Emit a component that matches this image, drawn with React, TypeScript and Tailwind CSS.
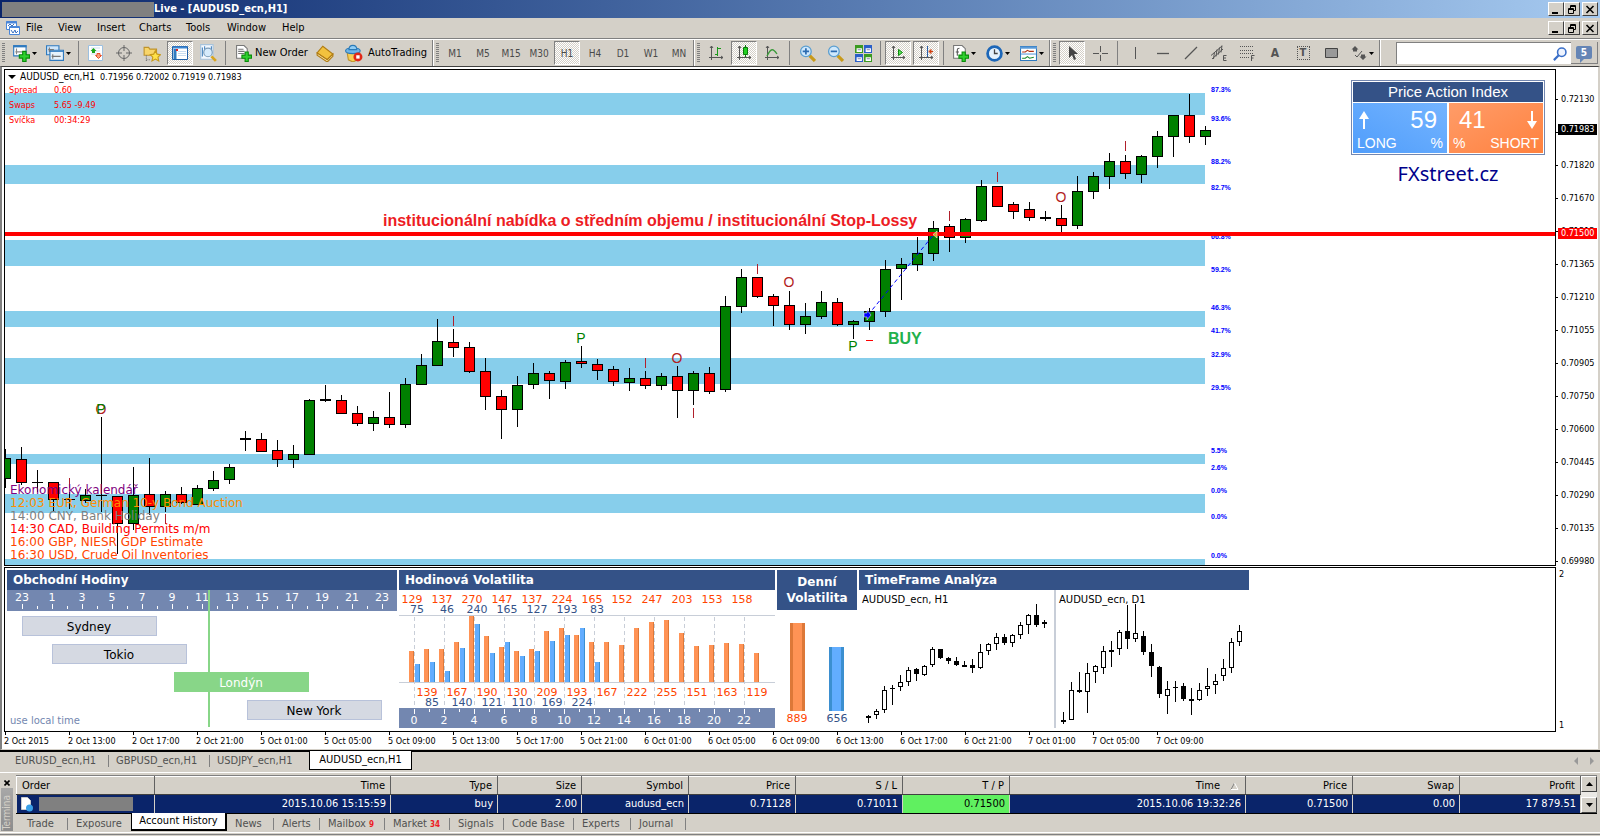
import React from "react";
import clsx from "clsx";

const menuItems = [
  { label: "File", width: "w-8" },
  { label: "View", width: "w-[39px]" },
  { label: "Insert", width: "w-[42px]" },
  { label: "Charts", width: "w-[47px]" },
  { label: "Tools", width: "w-[41px]" },
  { label: "Window", width: "w-[55px]" },
  { label: "Help", width: "w-10" },
];

const timeframes = ["M1", "M5", "M15", "M30", "H1", "H4", "D1", "W1", "MN"];

// [top, bottom] of the volume zones
const zones = [
  [93, 115],
  [165, 184],
  [240, 266],
  [311, 327],
  [358, 384],
  [454, 464],
  [494, 513],
  [559, 565],
];

// [high, low, body top, body bottom, rising]
const candles = [
  [449, 488, 458, 479, 1],
  [447, 485, 459, 483, 0],
  [470, 492, 482, 483, 0],
  [482, 511, 482, 500, 0],
  [492, 509, 499, 500, 0],
  [489, 503, 495, 501, 1],
  [417, 512, 495, 496, 0],
  [496, 554, 496, 524, 0],
  [467, 530, 495, 524, 1],
  [458, 515, 494, 507, 0],
  [491, 512, 494, 507, 1],
  [487, 504, 494, 503, 0],
  [485, 505, 488, 505, 1],
  [471, 491, 480, 489, 1],
  [464, 484, 467, 480, 1],
  [431, 451, 438, 440, 0],
  [433, 452, 439, 452, 0],
  [440, 467, 450, 460, 0],
  [445, 468, 454, 460, 1],
  [399, 455, 400, 455, 1],
  [385, 402, 399, 401, 0],
  [395, 414, 400, 414, 0],
  [406, 426, 413, 424, 0],
  [411, 431, 417, 424, 1],
  [392, 428, 417, 425, 0],
  [378, 428, 384, 425, 1],
  [354, 385, 365, 385, 1],
  [319, 366, 341, 366, 1],
  [329, 357, 342, 348, 0],
  [342, 373, 347, 372, 0],
  [358, 410, 371, 397, 0],
  [390, 439, 396, 410, 0],
  [376, 427, 385, 410, 1],
  [363, 389, 373, 385, 1],
  [371, 399, 373, 381, 0],
  [360, 389, 362, 382, 1],
  [346, 368, 361, 364, 0],
  [359, 380, 364, 371, 0],
  [366, 386, 369, 382, 0],
  [368, 391, 378, 383, 1],
  [371, 389, 378, 386, 0],
  [373, 390, 376, 386, 1],
  [366, 418, 376, 391, 0],
  [371, 405, 373, 391, 1],
  [367, 394, 373, 392, 0],
  [296, 392, 306, 390, 1],
  [269, 313, 277, 307, 1],
  [277, 298, 277, 297, 0],
  [294, 326, 296, 306, 0],
  [291, 330, 305, 325, 0],
  [303, 334, 316, 325, 1],
  [291, 319, 302, 317, 1],
  [298, 326, 302, 325, 0],
  [320, 339, 321, 325, 1],
  [308, 330, 311, 322, 1],
  [260, 317, 269, 312, 1],
  [258, 300, 264, 269, 1],
  [237, 271, 253, 265, 1],
  [221, 261, 228, 254, 1],
  [224, 252, 226, 238, 0],
  [218, 243, 219, 238, 1],
  [180, 222, 186, 221, 1],
  [186, 207, 186, 207, 0],
  [202, 219, 204, 212, 0],
  [202, 221, 209, 218, 0],
  [211, 221, 217, 219, 0],
  [205, 232, 218, 226, 0],
  [176, 229, 191, 226, 1],
  [172, 199, 176, 192, 1],
  [153, 189, 161, 177, 1],
  [155, 179, 161, 174, 0],
  [155, 183, 156, 175, 1],
  [131, 168, 136, 157, 1],
  [115, 157, 115, 137, 1],
  [94, 143, 115, 137, 0],
  [126, 145, 130, 137, 1],
];

const insideBars = [
  [69, 478],
  [165, 514],
  [453, 316],
  [645, 358],
  [693, 408],
  [757, 264],
  [949, 211],
  [997, 172],
  [1125, 141],
];

const letterMarks = [
  { x: 101, y: 414, text: "O", color: "#b22222" },
  { x: 101, y: 414, text: "P", color: "#008000" },
  { x: 581, y: 343, text: "P", color: "#008000" },
  { x: 677, y: 363, text: "O", color: "#b22222" },
  { x: 789, y: 287, text: "O", color: "#b22222" },
  { x: 853, y: 351, text: "P", color: "#008000" },
  { x: 1061, y: 202, text: "O", color: "#b22222" },
];

const zonePercents = [
  { y: 92, text: "87.3%" },
  { y: 121, text: "93.6%" },
  { y: 164, text: "88.2%" },
  { y: 190, text: "82.7%" },
  { y: 239, text: "66.8%" },
  { y: 272, text: "59.2%" },
  { y: 310, text: "46.3%" },
  { y: 333, text: "41.7%" },
  { y: 357, text: "32.9%" },
  { y: 390, text: "29.5%" },
  { y: 453, text: "5.5%" },
  { y: 470, text: "2.6%" },
  { y: 493, text: "0.0%" },
  { y: 519, text: "0.0%" },
  { y: 558, text: "0.0%" },
];

const prices = [
  "0.72130",
  "0.71975",
  "0.71820",
  "0.71670",
  "0.71515",
  "0.71365",
  "0.71210",
  "0.71055",
  "0.70905",
  "0.70750",
  "0.70600",
  "0.70445",
  "0.70290",
  "0.70135",
  "0.69980",
];

const times = [
  "2 Oct 2015",
  "2 Oct 13:00",
  "2 Oct 17:00",
  "2 Oct 21:00",
  "5 Oct 01:00",
  "5 Oct 05:00",
  "5 Oct 09:00",
  "5 Oct 13:00",
  "5 Oct 17:00",
  "5 Oct 21:00",
  "6 Oct 01:00",
  "6 Oct 05:00",
  "6 Oct 09:00",
  "6 Oct 13:00",
  "6 Oct 17:00",
  "6 Oct 21:00",
  "7 Oct 01:00",
  "7 Oct 05:00",
  "7 Oct 09:00",
];

const calendar = [
  { text: "12:03 EUR, German 10-y Bond Auction", color: "text-[#ff8c00]" },
  { text: "14:00 CNY, Bank Holiday", color: "text-[#808080]" },
  { text: "14:30 CAD, Building Permits m/m", color: "text-[#ff0000]" },
  { text: "16:00 GBP, NIESR GDP Estimate", color: "text-[#ff4500]" },
  { text: "16:30 USD, Crude Oil Inventories", color: "text-[#ff4500]" },
];

const sessions = [
  { name: "Sydney", x: 15, y: 26, active: false },
  { name: "Tokio", x: 45, y: 54, active: false },
  { name: "Londýn", x: 167, y: 82, active: true },
  { name: "New York", x: 240, y: 110, active: false },
];

const averageHeights = [
  31, 33, 33, 40, 66, 46, 35, 31, 33, 51, 54, 47, 40, 40, 37, 54, 60, 62, 49,
  36, 37, 39, 38, 29,
];
const todayHeights = [18, 20, 11, 34, 58, 29, 40, 26, 31, 41, 47, 54, 20];
const evenAverage = [129, 137, 270, 147, 137, 224, 165, 152, 247, 203, 153, 158];
const evenToday = [75, 46, 240, 165, 127, 193, 83];
const oddAverage = [139, 167, 190, 130, 209, 193, 167, 222, 255, 151, 163, 119];
const oddToday = [85, 140, 121, 110, 169, 224];

// [high, low, body top, body bottom, filled]
const hourMini = [
  [155, 163, 156, 158, 1],
  [149, 159, 151, 155, 0],
  [126, 153, 130, 150, 0],
  [125, 145, 128, 129, 1],
  [115, 131, 122, 127, 0],
  [107, 126, 110, 122, 0],
  [108, 121, 109, 114, 1],
  [105, 116, 106, 115, 0],
  [87, 107, 89, 105, 0],
  [89, 99, 89, 98, 1],
  [97, 104, 98, 101, 1],
  [97, 106, 101, 105, 1],
  [101, 107, 105, 107, 1],
  [99, 113, 105, 108, 1],
  [84, 109, 92, 108, 0],
  [83, 95, 84, 91, 0],
  [73, 90, 77, 84, 0],
  [74, 85, 77, 83, 1],
  [74, 87, 75, 83, 0],
  [62, 79, 65, 75, 0],
  [54, 74, 55, 65, 0],
  [44, 67, 55, 65, 1],
  [60, 68, 62, 64, 1],
];

const dayMini = [
  [152, 164, 160, 162, 1],
  [122, 160, 130, 160, 0],
  [112, 133, 130, 132, 1],
  [103, 153, 113, 132, 0],
  [105, 123, 106, 112, 0],
  [86, 114, 91, 108, 0],
  [81, 107, 90, 92, 1],
  [70, 95, 72, 89, 0],
  [45, 89, 71, 79, 1],
  [44, 82, 73, 79, 0],
  [71, 95, 76, 92, 1],
  [84, 117, 92, 106, 1],
  [106, 138, 107, 134, 1],
  [121, 154, 129, 136, 0],
  [121, 142, 127, 128, 1],
  [123, 141, 126, 139, 1],
  [128, 155, 139, 141, 1],
  [123, 141, 130, 140, 0],
  [108, 136, 126, 129, 0],
  [114, 134, 121, 125, 0],
  [99, 121, 108, 116, 0],
  [78, 113, 82, 108, 0],
  [65, 86, 71, 82, 0],
];

const chartTabs = [
  { label: "EURUSD_ecn,H1", width: "w-[101px]" },
  { label: "GBPUSD_ecn,H1", width: "w-[101px]" },
  { label: "USDJPY_ecn,H1", width: "w-[99px]" },
];

const columns = [
  { label: "Order", width: "w-[138px]" },
  { label: "Time", width: "w-[236px]" },
  { label: "Type", width: "w-[107px]" },
  { label: "Size", width: "w-[84px]" },
  { label: "Symbol", width: "w-[107px]" },
  { label: "Price", width: "w-[107px]" },
  { label: "S / L", width: "w-[107px]" },
  { label: "T / P", width: "w-[107px]" },
  { label: "Time", width: "w-[236px]", sorted: true },
  { label: "Price", width: "w-[107px]" },
  { label: "Swap", width: "w-[107px]" },
  { label: "Profit", width: "" },
];

const orderRow = [
  "2015.10.06 15:15:59",
  "buy",
  "2.00",
  "audusd_ecn",
  "0.71128",
  "0.71011",
  "0.71500",
  "2015.10.06 19:32:26",
  "0.71500",
  "0.00",
  "17 879.51",
];

const terminalTabs = [
  { label: "Trade", width: "w-[49px]" },
  { label: "Exposure", width: "w-[63px]", last: true },
  { label: "Account History", width: "w-24", active: true },
  { label: "News", width: "w-[47px]" },
  { label: "Alerts", width: "w-[46px]" },
  { label: "Mailbox", width: "w-[65px]", count: "9" },
  { label: "Market", width: "w-[65px]", count: "34" },
  { label: "Signals", width: "w-[54px]" },
  { label: "Code Base", width: "w-[70px]" },
  { label: "Experts", width: "w-[57px]" },
  { label: "Journal", width: "w-[55px]" },
];

function Icon({ children, size = 16 }: { children: React.ReactNode; size?: number }) {
  return (
    <svg width={size} height={size} viewBox="0 0 16 16" fill="none" className="shrink-0">
      {children}
    </svg>
  );
}

function Plus({ x, y }: { x: number; y: number }) {
  return (
    <path
      transform={`translate(${x} ${y})`}
      d="M3 0h3v3h3v3H6v3H3V6H0V3h3z"
      fill="#2fd02f"
      stroke="#0a8a0a"
    />
  );
}

function Caret() {
  return (
    <svg width="5" height="3" viewBox="0 0 5 3" className="shrink-0">
      <path d="M0 0h5L2.5 3z" fill="#000" />
    </svg>
  );
}

function Divider() {
  return <div className="mx-[3px] h-6 w-px shrink-0 bg-[#808080]" />;
}

function GroupEdge() {
  return <div className="h-[26px] w-[2px] shrink-0 border-r border-white bg-[#808080]" />;
}

function Grip() {
  return (
    <div className="mx-[2px] h-5 w-[3px] shrink-0 bg-[repeating-linear-gradient(#808080_0_1px,#d4d0c8_1px_2px)]" />
  );
}

type ToolProps = {
  label: string;
  pressed?: boolean;
  menu?: boolean;
  children: React.ReactNode;
};

function Tool({ label, pressed, menu, children }: ToolProps) {
  return (
    <button
      aria-label={label}
      className={clsx(
        "flex h-6 shrink-0 items-center justify-center",
        menu ? "w-[34px] gap-[2px]" : "mx-px w-[26px]",
        pressed &&
          "border border-t-[#808080] border-r-white border-b-white border-l-[#808080] bg-[repeating-conic-gradient(#fff_0_25%,#d4d0c8_0_50%)] bg-[length:2px_2px]"
      )}
    >
      {children}
      {menu && <Caret />}
    </button>
  );
}

function WindowButtons() {
  const frame =
    "flex h-[14px] w-4 items-center justify-center border border-t-white border-r-[#404040] border-b-[#404040] border-l-white bg-[#d4d0c8]";
  return (
    <div className="ml-auto flex pr-[2px]">
      <button aria-label="Minimize" className={frame}>
        <svg width="10" height="9">
          <path d="M1 7h6v2H1z" fill="#000" />
        </svg>
      </button>
      <button aria-label="Restore" className={frame}>
        <svg width="10" height="9" fill="none" stroke="#000">
          <path d="M3.5 3V.5h5v5H7M3 1.5h6M1.500 3.500h5v5h-5zM1 4.500h6" />
        </svg>
      </button>
      <button aria-label="Close" className={clsx(frame, "ml-[2px]")}>
        <svg width="10" height="9" stroke="#000" strokeWidth="1.600">
          <path d="M1.500 1l7 7M8.500 1l-7 7" />
        </svg>
      </button>
    </div>
  );
}

function TitleBar() {
  return (
    <header className="flex h-[18px] items-center bg-linear-to-r from-[#0a246a] to-[#a6caf0]">
      <div className="ml-[2px] h-[15px] w-[152px] bg-[#808080]" />
      <h1 className="text-[11px] leading-4 font-bold whitespace-nowrap text-white">
        Live - [AUDUSD_ecn,H1]
      </h1>
      <WindowButtons />
    </header>
  );
}

function MenuBar() {
  return (
    <nav className="flex h-[21px] items-center border-b border-[#808080] text-[11px] text-black">
      <div className="ml-[5px] w-[21px]">
        <Icon>
          <path d="M1.500 1.500h10v8h-10z" fill="#fff" stroke="#4a86d8" />
          <path d="M1 2.500h11" stroke="#4a86d8" strokeWidth="2" />
          <path d="M4.500 6.500h10v8h-10z" fill="#fff" stroke="#4a86d8" />
          <path d="M4 7.500h11" stroke="#4a86d8" />
          <path d="M3 6l2-2 2 2 2-2M6 10l2 3 2-3 1 3 2-2" stroke="#3a70c0" />
        </Icon>
      </div>
      {menuItems.map((item) => (
        <button key={item.label} className={clsx("text-left", item.width)}>
          {item.label}
        </button>
      ))}
      <WindowButtons />
    </nav>
  );
}

function Axes() {
  return <path d="M3.500 1v14M1 12.500h14M2 3l1.500-2L5 3M13 11l2 1.500-2 1.500" stroke="#555" />;
}

function Toolbar() {
  return (
    <div className="flex h-[27px] items-center border-t border-white text-[11px]">
      <Grip />
      <Tool label="New chart" menu>
        <Icon size={18}>
          <path d="M1.500 1.500h11v9h-11z" fill="#fff" stroke="#2f7abf" />
          <path d="M1 2h12" stroke="#2f7abf" strokeWidth="2" />
          <path d="M4 4v5M3 7h6" stroke="#888" />
          <Plus x={6.5} y={6.5} />
        </Icon>
      </Tool>
      <Tool label="Profiles" menu>
        <Icon size={18}>
          <path d="M.5 1.500h11v8H.5z" fill="#cfe6fa" stroke="#2f7abf" />
          <path d="M3.500 5.500h12v9h-12z" fill="#e6f2fc" stroke="#2f7abf" />
          <path d="M3 6.500h13" stroke="#2f7abf" />
          <path d="M3 3v4M2 5h5M6 9v4M5 11h8" stroke="#777" />
        </Icon>
      </Tool>
      <Divider />
      <Tool label="Market Watch">
        <Icon>
          <path d="M.5.5h14v15H.5z" fill="#fff" stroke="#9cc0e0" />
          <path d="M3 3h9M3 6h9M3 9h9" stroke="#cddff0" />
          <path d="M5.500 3L8.500 6H7v2H4V6H2.500z" fill="#19a319" />
          <path d="M10.500 13.500L7.500 10.500H9v-2h3v2h1.500z" fill="#f6a080" stroke="#e8502a" />
        </Icon>
      </Tool>
      <Tool label="Data Window">
        <Icon>
          <circle cx="8" cy="8" r="5.500" stroke="#666" />
          <path d="M8 0v6M8 10v6M0 8h6M10 8h6" stroke="#666" />
        </Icon>
      </Tool>
      <Tool label="Navigator">
        <Icon size={18}>
          <path d="M1 3h4l1 1.500h6V10H1z" fill="#f8d56a" stroke="#c0932a" />
          <path d="M3 10v5M3 14h3" stroke="#777" strokeDasharray="1 1" />
          <path
            d="M11 6l1.500 3 3 .5-2.200 2.200.7 3.300-3-1.600L8 15l.7-3.300L6.500 9.500l3-.5z"
            fill="#ffe24a"
            stroke="#c89a1a"
          />
        </Icon>
      </Tool>
      <Tool label="Terminal" pressed>
        <Icon>
          <path d="M.5 1.500h15v13H.5z" fill="#fff" stroke="#1f5fa8" />
          <path d="M1 2.500h14" stroke="#3d86d0" strokeWidth="2" />
          <path d="M3 4v10" stroke="#2f7abf" strokeWidth="3" />
          <path d="M6 6.500h8M6 8.500h8M6 10.500h8" stroke="#c8dcf0" />
          <path d="M4 5h2" stroke="#e02020" strokeWidth="2" />
        </Icon>
      </Tool>
      <Tool label="Strategy Tester">
        <Icon size={18}>
          <path d="M1.500.5h11v13h-11z" fill="#f4f9ff" stroke="#a8c4dc" />
          <path d="M3 3v8M5 2v6M11 2v5" stroke="#4a86c0" />
          <circle cx="8" cy="7.500" r="3.800" fill="#d6ebfc" stroke="#7c9cb8" />
          <path d="M11 11l4 4" stroke="#d8a520" strokeWidth="2.500" />
        </Icon>
      </Tool>
      <Divider />
      <button className="flex h-6 w-[82px] shrink-0 items-center gap-[3px] pl-[6px] whitespace-nowrap">
        <Icon size={17}>
          <path d="M1.500.5h7l3 3v9h-10z" fill="#fff" stroke="#777" />
          <path d="M3 4h5M3 6h6M3 8h6" stroke="#777" />
          <Plus x={6.5} y={6.5} />
        </Icon>
        New Order
      </button>
      <Tool label="MetaEditor">
        <Icon size={18}>
          <path d="M6 2l9 7-5 5-9-6z" fill="#f2c23e" stroke="#b07c14" />
          <path d="M1 8l9 6 5-5v2l-5 5-9-6z" fill="#fff0b8" stroke="#b07c14" />
        </Icon>
      </Tool>
      <button className="flex h-6 w-[93px] shrink-0 items-center gap-[5px] pl-[6px] whitespace-nowrap">
        <Icon size={18}>
          <path d="M2 8h11l-2 6-4 2-4-2z" fill="#f6cf56" stroke="#c0932a" />
          <ellipse cx="7" cy="6" rx="6.500" ry="2.500" fill="#6fb6ea" stroke="#2a7ab8" />
          <path d="M3.500 5c0-5 7-5 7 0z" fill="#8fccf4" stroke="#2a7ab8" />
          <circle cx="11.500" cy="11.500" r="4" fill="#e02818" />
          <path d="M10 10h3v3h-3z" fill="#fff" />
        </Icon>
        AutoTrading
      </button>
      <GroupEdge />
      <Grip />
      {timeframes.map((tf) => (
        <Tool key={tf} label={tf} pressed={tf === "H1"}>
          <span className="text-[10px] text-[#4a4a4a]">{tf}</span>
        </Tool>
      ))}
      <GroupEdge />
      <Grip />
      <Tool label="Bar Chart">
        <Icon>
          <Axes />
          <path d="M9.500 2v9M9 9.500H7M10 3.500h3" stroke="#1a9a1a" />
        </Icon>
      </Tool>
      <Tool label="Candlesticks" pressed>
        <Icon>
          <Axes />
          <path d="M9.500 0v12" stroke="#0a7a0a" />
          <path d="M7.500 2.500h4v7h-4z" fill="#22d022" stroke="#0a7a0a" />
        </Icon>
      </Tool>
      <Tool label="Line Chart">
        <Icon>
          <Axes />
          <path d="M3 11c4-8 6-8 10-2" stroke="#3a9a3a" strokeWidth="1.300" />
        </Icon>
      </Tool>
      <Divider />
      <Tool label="Zoom In">
        <Icon size={17}>
          <path d="M10 10l5 5" stroke="#c89a1a" strokeWidth="3" />
          <circle cx="6.500" cy="6" r="5" fill="#cfe8fc" stroke="#5a9ed0" strokeWidth="1.200" />
          <path d="M6.500 3v6M3.500 6h6" stroke="#2a6ab0" strokeWidth="1.600" />
        </Icon>
      </Tool>
      <Tool label="Zoom Out">
        <Icon size={17}>
          <path d="M10 10l5 5" stroke="#c89a1a" strokeWidth="3" />
          <circle cx="6.500" cy="6" r="5" fill="#cfe8fc" stroke="#5a9ed0" strokeWidth="1.200" />
          <path d="M3.500 6h6" stroke="#2a6ab0" strokeWidth="1.600" />
        </Icon>
      </Tool>
      <Tool label="Tile Windows">
        <Icon size={17}>
          <path d="M0 0h7.500v7.500H0zM8.500 8.500H16V16H8.500z" fill="#3a9a20" />
          <path d="M8.500 0H16v7.500H8.500zM0 8.500h7.500V16H0z" fill="#2a5fc8" />
          <path d="M1.500 3h5v3.500h-5zM10 3h5v3.500h-5zM1.500 11.500h5V15h-5zM10 11.500h5V15h-5z" fill="#fff" />
          <path d="M2.500 4.500h3M11 4.500h3M2.500 13h3M11 13h3" stroke="#88a" />
        </Icon>
      </Tool>
      <Divider />
      <Tool label="Auto Scroll" pressed>
        <Icon>
          <Axes />
          <path d="M8.500 4.500l4 3-4 3z" fill="#5ae05a" stroke="#0a8a0a" />
        </Icon>
      </Tool>
      <Tool label="Chart Shift" pressed>
        <Icon>
          <Axes />
          <path d="M9.500 1v11" stroke="#2a5fa8" />
          <path d="M15 6.500h-3M13 4.500l-2 2 2 2z" fill="#d04010" stroke="#d04010" />
        </Icon>
      </Tool>
      <Divider />
      <Tool label="Indicators" menu>
        <Icon size={17}>
          <path d="M1.500.5h8l3 3v9h-11z" fill="#fff" stroke="#777" />
          <path d="M5 10V4.500Q5 3 7 3M3.500 6.500h3" stroke="#555" />
          <Plus x={6.5} y={6.5} />
        </Icon>
      </Tool>
      <Tool label="Periods" menu>
        <Icon size={17}>
          <circle cx="8" cy="8" r="6.500" fill="#e6f2fc" stroke="#1c66b8" strokeWidth="2.600" />
          <path d="M8 4v4h3" stroke="#444" strokeWidth="1.200" />
        </Icon>
      </Tool>
      <Tool label="Templates" menu>
        <Icon size={17}>
          <path d="M.5 1.500h15v13H.5z" fill="#fff" stroke="#2f7abf" />
          <path d="M0 2.500h16" stroke="#5a9ad8" strokeWidth="2" />
          <path d="M1 8.500h14" stroke="#5a9ad8" />
          <path d="M2 6.500h3l2-1.500 2 1h4" stroke="#b03010" />
          <path d="M2 12.500h3l2-1.500 2 1.500 4-1" stroke="#1a8a2a" />
        </Icon>
      </Tool>
      <GroupEdge />
      <Grip />
      <Tool label="Cursor" pressed>
        <Icon>
          <path d="M5 1v12l3-3 2 5 2-1-2-5h4z" fill="#444" />
        </Icon>
      </Tool>
      <Tool label="Crosshair">
        <Icon>
          <path d="M8.500 1v6M8.500 10v6M1 8.500h6M10 8.500h6" stroke="#555" />
        </Icon>
      </Tool>
      <Divider />
      <Tool label="Vertical Line">
        <Icon>
          <path d="M8.500 2v12" stroke="#555" />
        </Icon>
      </Tool>
      <Tool label="Horizontal Line">
        <Icon>
          <path d="M2 8.500h12" stroke="#555" strokeWidth="1.300" />
        </Icon>
      </Tool>
      <Tool label="Trendline">
        <Icon>
          <path d="M2 14L14 2" stroke="#555" strokeWidth="1.200" />
        </Icon>
      </Tool>
      <Tool label="Equidistant Channel">
        <Icon>
          <path d="M0 10.500L11 1M1 14L12 4M3.500 7l-1 7M6 4.500l-1 7M8.500 2.500l-1 7M11 .5l-1 7" stroke="#555" />
          <path d="M15.500 10.500h-3v5h3M12.500 13h2.500" stroke="#555" />
        </Icon>
      </Tool>
      <Tool label="Fibonacci Retracement">
        <Icon>
          <path d="M1 1.500h13M1 5.500h13M1 8.500h13M1 12.500h9" stroke="#555" strokeDasharray="1 1" />
          <path d="M15.500 10.500h-3V16M12.500 13h2" stroke="#555" />
        </Icon>
      </Tool>
      <Tool label="Text">
        <span className="text-[12px] font-bold text-[#555]">A</span>
      </Tool>
      <Tool label="Text Label">
        <span className="flex h-[14px] w-[13px] items-center justify-center border border-dotted border-[#555] text-[11px] leading-3 font-bold text-[#555]">
          T
        </span>
      </Tool>
      <Tool label="Rectangle">
        <Icon>
          <path d="M2.500 3.500h12v9h-12z" fill="#999" stroke="#444" />
        </Icon>
      </Tool>
      <Tool label="Arrows" menu>
        <Icon>
          <path d="M4 1l3.500 3.500H6v2H2v-2H.5zM12 15l-3.500-3.500H10v-2h4v2h1.500z" fill="#555" />
          <path d="M4 10l2 2 5-6" stroke="#555" />
        </Icon>
      </Tool>
      <GroupEdge />
      <label className="ml-[15px] flex h-[22px] min-w-0 flex-1 items-center border-t border-l border-[#808080] bg-white pr-1">
        <input aria-label="Search" className="min-w-0 flex-1 bg-transparent px-1 outline-none" />
        <Icon size={14}>
          <circle cx="10" cy="6" r="4.800" fill="#eef4ff" stroke="#3a6fc8" strokeWidth="1.800" />
          <path d="M6.500 9.500L1 15" stroke="#3a6fc8" strokeWidth="2.500" />
        </Icon>
      </label>
      <button className="mr-[2px] flex h-[22px] w-[27px] shrink-0 items-center justify-center border-r border-b border-[#808080]">
        <span className="relative flex h-[13px] w-4 items-center justify-center rounded-xs bg-[#6585b5] text-[10px] font-bold text-white after:absolute after:top-[13px] after:left-1 after:border-t-4 after:border-r-4 after:border-t-[#6585b5] after:border-r-transparent">
          5
        </span>
      </button>
    </div>
  );
}

function Candle({ x, data }: { x: number; data: number[] }) {
  const [high, low, top, bottom, rising] = data;
  return (
    <g>
      <rect x={x} y={high} width="1" height={low - high} fill="#000" />
      <rect x={x - 5} y={top} width="11" height={bottom - top} fill="#000" />
      {bottom - top > 2 && (
        <rect
          x={x - 4}
          y={top + 1}
          width="9"
          height={bottom - top - 2}
          fill={rising ? "#008000" : "#ff0000"}
        />
      )}
    </g>
  );
}

function PriceActionIndex() {
  return (
    <aside className="absolute top-[10px] right-[10px] flex w-[194px] flex-col items-center font-['Liberation_Sans',sans-serif]">
      <div className="w-full border border-[#7387b0] bg-white p-px">
        <h2 className="h-5 bg-[#345287] text-center text-[15px] leading-5 text-white">
          Price Action Index
        </h2>
        <div className="mt-px grid grid-cols-2 gap-[2px] text-white">
          <div className="h-[50px] bg-linear-to-tr from-[#4f9dfb] to-[#74b4ff] px-1">
            <div className="flex h-[33px] items-center justify-between pr-[6px] pl-[2px] text-[24px]">
              <svg width="10" height="18" viewBox="0 0 10 18" fill="#fff">
                <path d="M5 0l5 8H6v10H4V8H0z" />
              </svg>
              59
            </div>
            <div className="flex justify-between text-[14px] leading-[14px]">
              <span>LONG</span>
              <span>%</span>
            </div>
          </div>
          <div className="h-[50px] bg-linear-to-br from-[#ff9c68] to-[#ff813d] px-1">
            <div className="flex h-[33px] items-center justify-between pr-[2px] pl-[6px] text-[24px]">
              41
              <svg width="10" height="18" viewBox="0 0 10 18" fill="#fff">
                <path d="M5 18l5-8H6V0H4v10H0z" />
              </svg>
            </div>
            <div className="flex justify-between text-[14px] leading-[14px]">
              <span>%</span>
              <span>SHORT</span>
            </div>
          </div>
        </div>
      </div>
      <a
        href="#fxstreet"
        className="mt-[7px] font-['Noto_Sans',sans-serif] text-[20px] leading-6 text-[#00008b]"
      >
        FXstreet.cz
      </a>
    </aside>
  );
}

function PriceChart() {
  return (
    <section className="relative h-[497px] min-w-0 flex-1 overflow-hidden border border-black bg-white">
      <svg width="100%" height="495" className="block">
        {/* the numbers below count from the window's corner */}
        <g transform="translate(-5 -70)">
          {zones.map(([top, bottom]) => (
            <rect key={top} x="5" y={top} width="1200" height={bottom - top} fill="#87ceeb" />
          ))}
          {candles.map((data, i) => (
            <Candle key={i} x={5 + i * 16} data={data} />
          ))}
          {insideBars.map(([x, y]) => (
            <rect key={x} x={x} y={y} width="1" height="10" fill="#b0202c" />
          ))}
          <rect x="866" y="340" width="7" height="1" fill="#f00" />
          <g fontFamily="Liberation Sans" fontSize="14" textAnchor="middle">
            {letterMarks.map((mark, i) => (
              <text key={i} x={mark.x} y={mark.y} fill={mark.color}>
                {mark.text}
              </text>
            ))}
          </g>
          <g fontFamily="Liberation Sans" fontSize="7" fontWeight="bold" fill="#0000ff">
            {zonePercents.map((item) => (
              <text key={item.y} x="1211" y={item.y}>
                {item.text}
              </text>
            ))}
          </g>
        </g>
        <rect x="0" y="162" width="100%" height="4" fill="#ff0000" />
        <g transform="translate(-5 -70)">
          <path d="M868 315L935 233" stroke="#0000ff" strokeDasharray="4 3" />
          <path d="M864 313h3v-3l4 5-4 5v-3h-3z" fill="#0000ff" stroke="#fff" strokeWidth="0.500" />
          <path d="M937 231l-4 3.500 4 3.500z" fill="#daa520" stroke="#fff" strokeWidth="0.500" />
          <g fontFamily="Liberation Sans" fontSize="16" fontWeight="bold">
            <text x="383" y="226" fill="#ed1c24">
              institucionální nabídka o středním objemu / institucionální Stop-Lossy
            </text>
            <text x="888" y="344" fill="#22b14c">
              BUY
            </text>
          </g>
        </g>
      </svg>

      <div className="absolute top-[1px] left-[3px] flex items-center gap-1 text-[9px] leading-3 text-black">
        <svg width="8" height="4">
          <path d="M0 0h8L4 4z" />
        </svg>
        <span className="text-[10px]">AUDUSD_ecn,H1</span>
        <span className="pl-px">0.71956 0.72002 0.71919 0.71983</span>
      </div>
      <dl className="absolute top-[13px] left-1 grid grid-cols-[45px_auto] text-[9px] leading-[15px] text-[#ff0000]">
        <dt>Spread</dt>
        <dd>0.60</dd>
        <dt>Swaps</dt>
        <dd>5.65 -9.49</dd>
        <dt>Svíčka</dt>
        <dd>00:34:29</dd>
      </dl>
      <div className="absolute bottom-[3px] left-[5px] font-['DejaVu_Sans',sans-serif] text-[12px] leading-[13px]">
        <h2 className="text-[#800080]">Ekonomický kalendář</h2>
        <ul>
          {calendar.map((event) => (
            <li key={event.text} className={event.color}>
              {event.text}
            </li>
          ))}
        </ul>
      </div>
      <PriceActionIndex />
    </section>
  );
}

function PriceAxis() {
  return (
    <div className="relative h-[497px] w-[42px] shrink-0 pt-[14px] text-[9px] text-black">
      {prices.map((price) => (
        <div key={price} className="flex h-[33px] items-center gap-[3px]">
          <span className="h-px w-[2px] bg-black" />
          {price}
        </div>
      ))}
      <span className="absolute top-[55px] left-[2px] h-[11px] w-[39px] bg-black pl-[3px] leading-[11px] text-white">
        0.71983
      </span>
      <span className="absolute top-[159px] left-[2px] h-[11px] w-[39px] bg-[#ff0000] pl-[3px] leading-[11px] text-white">
        0.71500
      </span>
    </div>
  );
}

function PanelTitle({ children }: { children: React.ReactNode }) {
  return (
    <h2 className="h-5 bg-[#345287] pl-[6px] text-[12px] leading-5 font-bold text-white">
      {children}
    </h2>
  );
}

function TradingHours() {
  return (
    <section className="w-[390px] shrink-0">
      <PanelTitle>Obchodní Hodiny</PanelTitle>
      <svg width="390" height="140" className="block">
        <rect width="390" height="21" fill="#7387b0" />
        {[23, 1, 3, 5, 7, 9, 11, 13, 15, 17, 19, 21, 23].map((hour, i) => (
          <g key={i} fill="#fff">
            <text x={15 + i * 30} y="11" fontSize="11" textAnchor="middle">
              {hour}
            </text>
            <rect x={15 + i * 30} y="14" width="1" height="5" />
            {i < 12 && <rect x={30 + i * 30} y="16" width="1" height="3" />}
          </g>
        ))}
        <rect x="201" y="0" width="2" height="137" fill="#88d688" />
        {sessions.map((session) => (
          <g key={session.name}>
            <rect
              x={session.x + 0.5}
              y={session.y + 0.5}
              width="134"
              height="19"
              fill={session.active ? "#88d688" : "#d5d9e2"}
              stroke={session.active ? "#88d688" : "#b8c2da"}
            />
            <text
              x={session.x + 67}
              y={session.y + 15}
              textAnchor="middle"
              fontSize="12"
              fill={session.active ? "#fff" : "#000"}
            >
              {session.name}
            </text>
          </g>
        ))}
        <text x="3" y="134" fontSize="10" fill="#7387b0">
          use local time
        </text>
      </svg>
    </section>
  );
}

function Bar({ x, height, today }: { x: number; height: number; today?: boolean }) {
  return (
    <g>
      <rect x={x} y={92 - height} width="5" height={height} fill={today ? "#62adff" : "#ff9355"} />
      <rect x={x + 4} y={92 - height} width="1" height={height} fill={today ? "#3b8fd0" : "#dd7838"} />
    </g>
  );
}

function Labels({ values, x, y, color }: { values: number[]; x: number; y: number; color: string }) {
  return (
    <g fontSize="11" textAnchor="middle" fill={color}>
      {values.map((value, i) => (
        <text key={i} x={x + i * 30} y={y}>
          {value}
        </text>
      ))}
    </g>
  );
}

function HourlyVolatility() {
  return (
    <section className="w-[376px] shrink-0">
      <PanelTitle>Hodinová Volatilita</PanelTitle>
      <svg width="376" height="140" className="block">
        {evenAverage.map((_, i) => (
          <path key={i} d={`M${15.5 + i * 30} 27v91`} stroke="#c8ced8" strokeDasharray="4 3" />
        ))}
        <Labels values={evenAverage} x={13} y={13} color="#ff4500" />
        <Labels values={evenToday} x={18} y={23} color="#345287" />
        <rect y="25" width="376" height="1" fill="#c8ced8" />
        <rect y="92" width="376" height="1" fill="#c8ced8" />
        {averageHeights.map((height, i) => (
          <Bar key={i} x={10 + i * 15} height={height} />
        ))}
        {todayHeights.map((height, i) => (
          <Bar key={i} x={16 + i * 15} height={height} today />
        ))}
        <Labels values={oddAverage} x={28} y={106} color="#ff4500" />
        <Labels values={oddToday} x={33} y={116} color="#345287" />
        <rect y="118" width="376" height="20" fill="#7387b0" />
        {averageHeights.map((_, i) => (
          <rect key={i} x={15 + i * 15} y="119" width="1" height={i % 2 ? 3 : 5} fill="#fff" />
        ))}
        <Labels values={[0, 2, 4, 6, 8, 10, 12, 14, 16, 18, 20, 22]} x={15} y={134} color="#fff" />
      </svg>
    </section>
  );
}

function DailyVolatility() {
  return (
    <section className="w-20 shrink-0">
      <h2 className="flex h-10 flex-col justify-center bg-[#345287] text-center text-[12px] leading-4 font-bold text-white">
        Denní Volatilita
      </h2>
      <svg width="80" height="120" className="block" fontSize="11" textAnchor="middle">
        <rect x="13" y="13" width="15" height="88" fill="#dd7838" />
        <rect x="16" y="13" width="9" height="88" fill="#ff9355" />
        <rect x="52" y="37" width="15" height="64" fill="#3b8fd0" />
        <rect x="55" y="37" width="9" height="64" fill="#62adff" />
        <text x="20" y="112" fill="#ff4500">
          889
        </text>
        <text x="60" y="112" fill="#345287">
          656
        </text>
      </svg>
    </section>
  );
}

function MiniCandles({ data, x }: { data: number[][]; x: number }) {
  return (
    <g>
      {data.map(([high, low, top, bottom, filled], i) => (
        <g key={i}>
          <rect x={x + i * 8} y={high - 30} width="1" height={low - high} />
          <rect x={x - 2 + i * 8} y={top - 30} width="5" height={bottom - top} />
          {!filled && (
            <rect x={x - 1 + i * 8} y={top - 29} width="3" height={bottom - top - 2} fill="#fff" />
          )}
        </g>
      ))}
    </g>
  );
}

function TimeFrameAnalysis() {
  return (
    <section className="w-[390px] shrink-0">
      <PanelTitle>TimeFrame Analýza</PanelTitle>
      <svg width="390" height="140" className="block" fontSize="10">
        <rect x="195" width="2" height="138" fill="#c8ced8" />
        <text x="3" y="13">
          AUDUSD_ecn, H1
        </text>
        <text x="200" y="13">
          AUDUSD_ecn, D1
        </text>
        <MiniCandles data={hourMini} x={9} />
        <MiniCandles data={dayMini} x={204} />
      </svg>
    </section>
  );
}

function TimeAxis() {
  return (
    <div className="flex h-[17px] overflow-hidden pl-px text-[9px] text-black">
      {times.map((time) => (
        <div key={time} className="w-16 shrink-0 whitespace-nowrap">
          <div className="h-[3px] w-px bg-black" />
          <div className="-ml-px leading-3">{time}</div>
        </div>
      ))}
    </div>
  );
}

function ChartWindow() {
  return (
    <main className="border-t border-r-2 border-b border-l-2 border-t-[#404040] border-r-[#d4d0c8] border-b-[#d4d0c8] border-l-[#808080] bg-white pt-[2px] pl-[2px]">
      <div className="flex">
        <PriceChart />
        <PriceAxis />
      </div>
      <div className="mt-px flex">
        <div className="flex h-[165px] min-w-0 flex-1 gap-[2px] overflow-hidden border border-black pt-[2px] pl-[2px] font-['DejaVu_Sans',sans-serif]">
          <TradingHours />
          <HourlyVolatility />
          <DailyVolatility />
          <TimeFrameAnalysis />
        </div>
        <div className="flex w-[42px] shrink-0 flex-col justify-between pl-[3px] text-[9px] leading-[14px]">
          <span>2</span>
          <span>1</span>
        </div>
      </div>
      <TimeAxis />
    </main>
  );
}

function ChartTabs() {
  return (
    <div className="flex h-[23px] items-start border-t-2 border-b border-t-black border-b-white pl-2 text-[11px]">
      {chartTabs.map((tab, i) => (
        <button
          key={tab.label}
          className={clsx(
            "mt-[3px] h-3 shrink-0 border-[#808080] pl-[7px] text-left leading-3 text-[#505050]",
            tab.width,
            i < 2 && "border-r"
          )}
        >
          {tab.label}
        </button>
      ))}
      <button className="-mt-px h-[19px] w-[103px] shrink-0 border-r border-b border-l border-black bg-white text-center leading-[18px]">
        AUDUSD_ecn,H1
      </button>
      <div className="mt-[5px] ml-auto flex gap-3 pr-[6px]">
        <svg width="4" height="8" fill="#999">
          <path d="M4 0v8L0 4z" />
        </svg>
        <svg width="4" height="8" fill="#999">
          <path d="M0 0v8l4-4z" />
        </svg>
      </div>
    </div>
  );
}

function ScrollButton({ label, path }: { label: string; path: string }) {
  return (
    <button
      aria-label={label}
      className="flex h-4 w-4 items-center justify-center border border-t-white border-r-[#404040] border-b-[#404040] border-l-white bg-[#d4d0c8]"
    >
      <svg width="7" height="4">
        <path d={path} />
      </svg>
    </button>
  );
}

function HistoryTable() {
  return (
    <div className="flex border-t border-[#808080]">
      <table className="w-full min-w-0 flex-1 table-fixed border-collapse text-right text-[11px]">
        <thead>
          <tr className="h-[18px]">
            {columns.map((column, i) => (
              <th
                key={i}
                className={clsx(
                  "border border-t-white border-r-[#606060] border-b-[#404040] border-l-white px-[5px] py-0 leading-4 font-normal",
                  column.width,
                  i === 0 && "text-left"
                )}
              >
                {column.label}
                {column.sorted && (
                  <svg width="9" height="8" className="mr-px ml-[10px] inline-block" fill="none">
                    <path d="M4.500 1L1 7.500" stroke="#808080" />
                    <path d="M4.500 1L8 7.500H1" stroke="#fff" />
                  </svg>
                )}
              </th>
            ))}
          </tr>
        </thead>
        <tbody>
          <tr className="h-[18px] bg-[#0a246a] text-white">
            <td className="border-r border-[#d4d0c8] p-0">
              <div className="flex items-center gap-[5px] pl-[3px]">
                <svg width="14" height="16" fill="none">
                  <path d="M1.500 1.500h6l3 3v9h-9z" fill="#fff" stroke="#ccc" />
                  <circle cx="9.500" cy="12" r="3.500" fill="#3aa0e8" />
                </svg>
                <div className="h-[14px] w-[94px] bg-[#808080]" />
              </div>
            </td>
            {orderRow.map((value, i) => (
              <td
                key={i}
                className={clsx(
                  "border-r border-[#d4d0c8] py-0 pr-1 leading-4 whitespace-nowrap",
                  i === 6 && "bg-[#60f060] text-black"
                )}
              >
                {value}
              </td>
            ))}
          </tr>
        </tbody>
      </table>
      <div className="flex w-4 shrink-0 flex-col justify-between bg-[#eae8e4]">
        <ScrollButton label="Scroll up" path="M0 4h7L3.500 0z" />
        <ScrollButton label="Scroll down" path="M0 0h7L3.500 4z" />
      </div>
    </div>
  );
}

function Terminal() {
  return (
    <section className="mt-[2px] flex border-b border-white">
      <div className="flex w-[14px] shrink-0 flex-col items-center">
        <button aria-label="Close terminal" className="h-[13px] pt-[2px]">
          <svg width="6" height="6" stroke="#000" strokeWidth="1.600">
            <path d="M.5.5l5 5M5.500.5l-5 5" />
          </svg>
        </button>
        <div className="flex h-[43px] w-3 items-end justify-center bg-linear-to-b from-[#a8a8a8] to-[#8c8c8c] pb-px text-[10px] leading-3 text-[#d4d0c8]">
          <span className="rotate-180 [writing-mode:vertical-rl]">Termina</span>
        </div>
      </div>
      <div className="min-w-0 flex-1 pr-[3px] pl-[2px]">
        <HistoryTable />
        <div className="flex h-[19px] items-start border-t border-black pl-[3px] text-[11px]">
          {terminalTabs.map((tab) => (
            <button
              key={tab.label}
              className={clsx(
                "shrink-0 whitespace-nowrap",
                tab.width,
                tab.active
                  ? "-mt-px h-[18px] border-r-2 border-b-2 border-l border-black bg-white text-black"
                  : "mt-1 h-3 border-[#808080] pl-2 text-left leading-3 text-[#505050]",
                !tab.active && !tab.last && "border-r"
              )}
            >
              {tab.label}
              {tab.count && (
                <span className="ml-[3px] text-[8px] font-bold text-[#ed1c24]">{tab.count}</span>
              )}
            </button>
          ))}
        </div>
      </div>
    </section>
  );
}

export default function App() {
  return (
    <div className="min-h-screen overflow-hidden bg-[#d4d0c8] font-['DejaVu_Sans_Condensed','Noto_Sans',sans-serif]">
      <TitleBar />
      <MenuBar />
      <Toolbar />
      <ChartWindow />
      <ChartTabs />
      <Terminal />
      <div className="mt-px h-px bg-[#808080]" />
    </div>
  );
}
